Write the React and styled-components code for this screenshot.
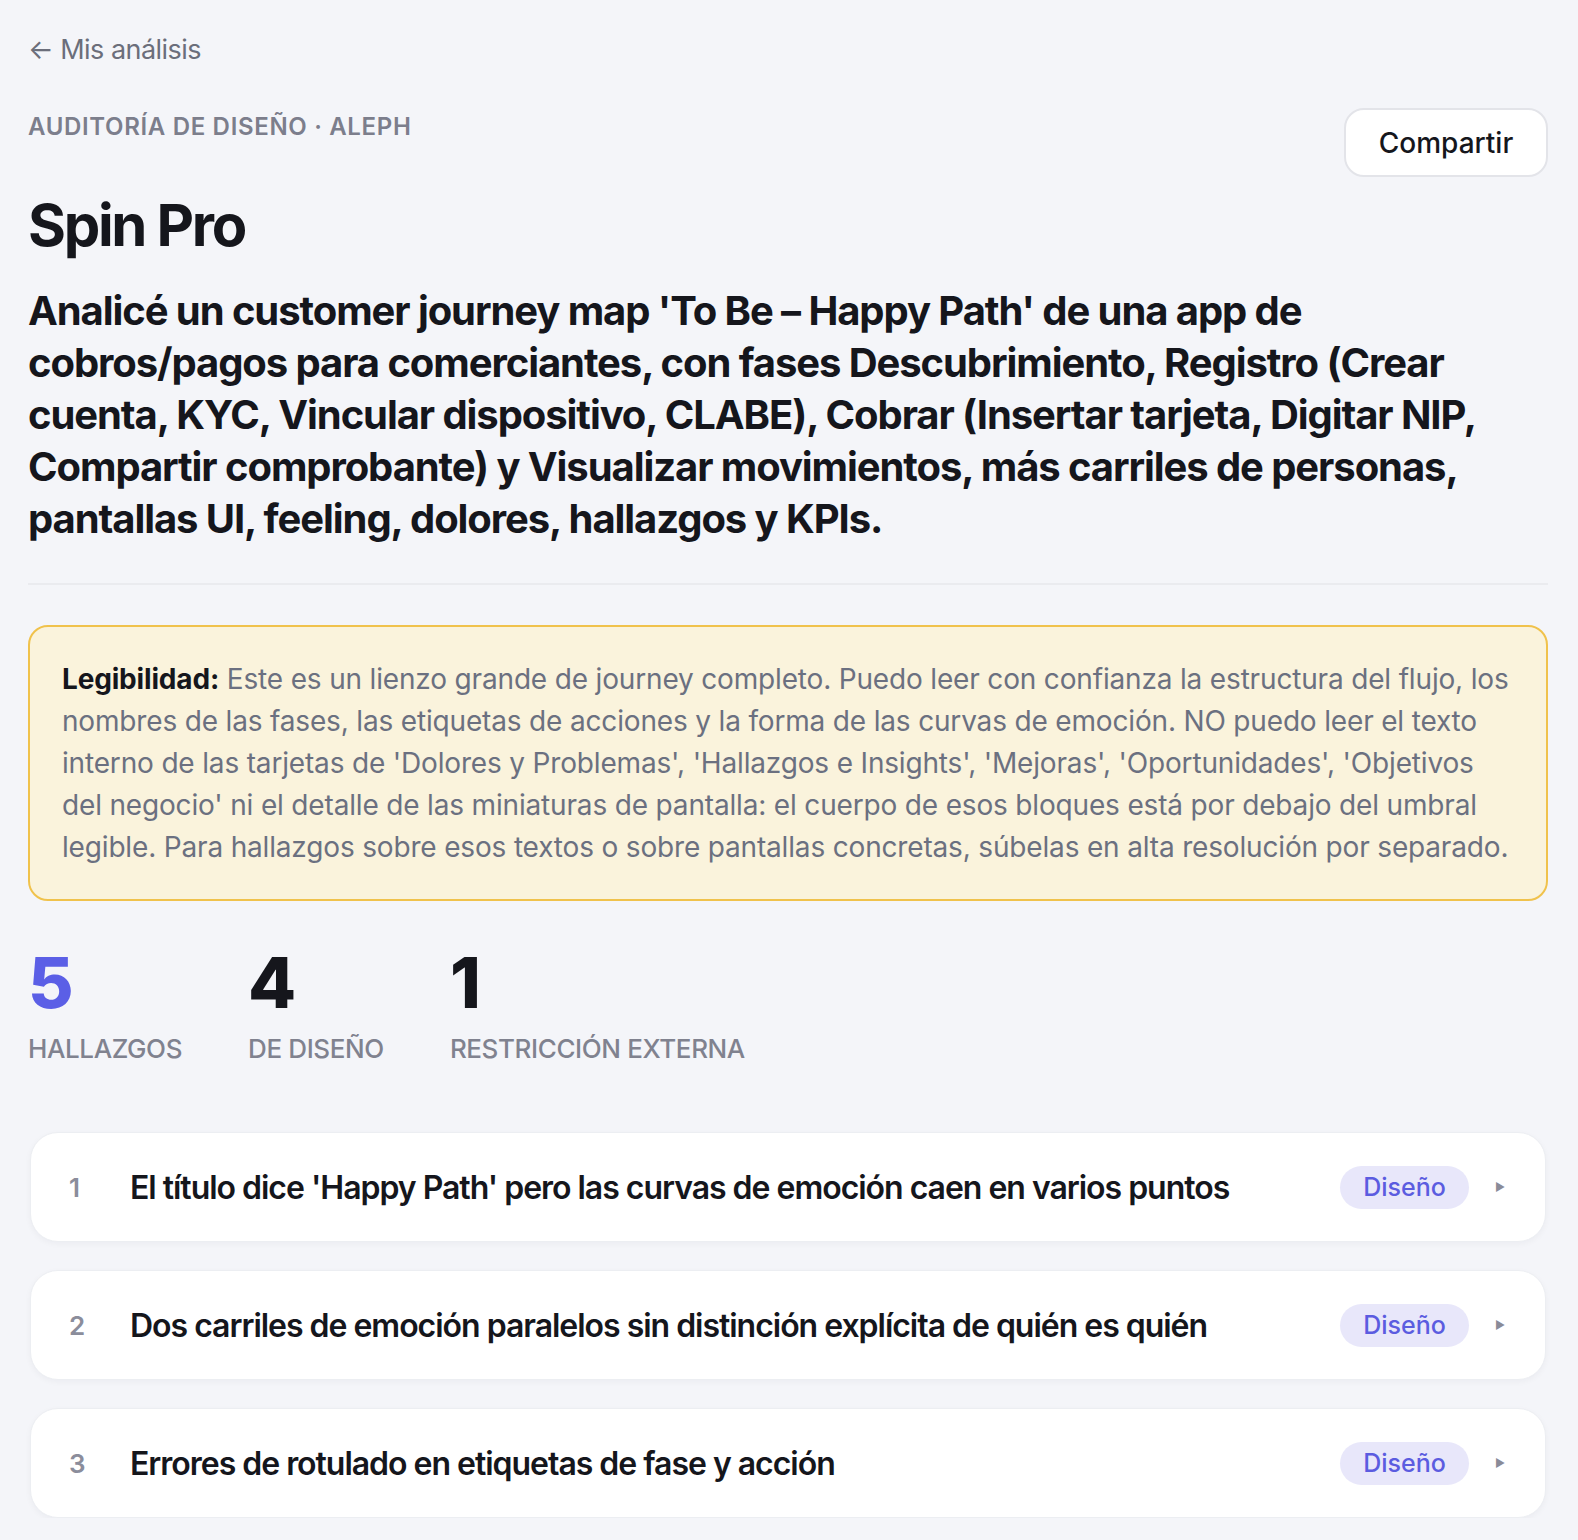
import React from "react";
import styled, { createGlobalStyle } from "styled-components";

const GlobalStyle = createGlobalStyle`
  html, body {
    margin: 0;
    padding: 0;
    background: #f4f5f9;
  }
  body {
    font-family: "Inter", "Noto Sans", sans-serif;
    color: #15161c;
    -webkit-font-smoothing: antialiased;
  }
  * {
    box-sizing: border-box;
  }
`;

const Page = styled.div`
  padding: 33px 30px 0 28px;
  display: flex;
  flex-direction: column;
`;

const BackLink = styled.a`
  font-size: 27px;
  line-height: 34px;
  color: #6b6e7b;
  text-decoration: none;
  letter-spacing: -0.02em;
  align-self: flex-start;
`;

const HeaderRow = styled.div`
  display: flex;
  justify-content: space-between;
  align-items: flex-start;
  margin-top: 41px;
`;

const HeaderText = styled.div`
  display: flex;
  flex-direction: column;
`;

const Eyebrow = styled.div`
  margin-top: 5px;
  font-size: 24px;
  line-height: 28px;
  font-weight: 600;
  letter-spacing: 0.028em;
  text-transform: uppercase;
  color: #7c7e8c;
`;

const Title = styled.h1`
  margin: 49px 0 0;
  font-size: 58px;
  line-height: 70px;
  font-weight: 700;
  letter-spacing: -0.04em;
  color: #15161c;
`;

const ShareButton = styled.button`
  width: 204px;
  height: 69px;
  border: 2px solid #e3e4e9;
  border-radius: 20px;
  background: #ffffff;
  font-family: inherit;
  font-size: 28px;
  font-weight: 500;
  color: #15161c;
  cursor: pointer;
`;

const Summary = styled.p`
  margin: 25px 0 0;
  font-size: 40px;
  line-height: 52px;
  font-weight: 700;
  letter-spacing: -0.027em;
  color: #15161c;
`;

const Divider = styled.hr`
  margin: 38px 0 0;
  border: 0;
  height: 2px;
  background: #eaebef;
`;

const Callout = styled.div`
  margin-top: 40px;
  padding: 31px 32px;
  border: 2px solid #f0c24c;
  border-radius: 20px;
  background: #faf3dc;
  font-size: 28px;
  line-height: 42px;
  letter-spacing: -0.006em;
  color: #6b7080;

  strong {
    font-weight: 700;
    color: #15161c;
  }
`;

const Stats = styled.div`
  display: flex;
  gap: 66px;
  margin-top: 42px;
`;

const Stat = styled.div`
  display: flex;
  flex-direction: column;
`;

const StatValue = styled.div`
  font-size: 70px;
  line-height: 80px;
  font-weight: 800;
  letter-spacing: -0.02em;
  color: ${(p) => (p.$accent ? "#5b5fe6" : "#15161c")};
`;

const StatLabel = styled.div`
  margin-top: 10px;
  font-size: 26px;
  line-height: 32px;
  font-weight: 500;
  letter-spacing: -0.015em;
  text-transform: uppercase;
  color: #80828f;
`;

const FindingList = styled.div`
  display: flex;
  flex-direction: column;
  gap: 28px;
  margin: 67px 2px 0;
`;

const FindingCard = styled.div`
  display: flex;
  align-items: center;
  height: 110px;
  padding: 0 40px 0 38px;
  background: #ffffff;
  border: 1px solid #eceef2;
  border-radius: 28px;
  box-shadow: 0 2px 6px rgba(20, 22, 40, 0.04);
`;

const FindingIndex = styled.span`
  width: 61px;
  flex: none;
  font-size: 26px;
  font-weight: 600;
  color: #8b8d9b;
`;

const FindingTitle = styled.span`
  flex: 1;
  font-size: 32px;
  font-weight: 600;
  letter-spacing: -0.032em;
  color: #15161c;
`;

const Badge = styled.span`
  display: inline-flex;
  align-items: center;
  height: 43px;
  padding: 0 23px;
  border-radius: 22px;
  background: #e8e7fa;
  font-size: 25px;
  font-weight: 500;
  color: #5b5ce0;
`;

const Caret = styled.span`
  margin-left: 26px;
  font-size: 11px;
  color: #8a8b98;
`;

const findings = [
  "El título dice 'Happy Path' pero las curvas de emoción caen en varios puntos",
  "Dos carriles de emoción paralelos sin distinción explícita de quién es quién",
  "Errores de rotulado en etiquetas de fase y acción",
];

export default function App() {
  return (
    <>
      <GlobalStyle />
      <Page>
        <BackLink href="#">← Mis análisis</BackLink>
        <HeaderRow>
          <HeaderText>
            <Eyebrow>Auditoría de diseño · Aleph</Eyebrow>
            <Title>Spin Pro</Title>
          </HeaderText>
          <ShareButton>Compartir</ShareButton>
        </HeaderRow>
        <Summary>
          Analicé un customer journey map 'To Be – Happy Path' de una app de
          cobros/pagos para comerciantes, con fases Descubrimiento, Registro
          (Crear cuenta, KYC, Vincular dispositivo, CLABE), Cobrar (Insertar
          tarjeta, Digitar NIP, Compartir comprobante) y Visualizar
          movimientos, más carriles de personas, pantallas UI, feeling,
          dolores, hallazgos y KPIs.
        </Summary>
        <Divider />
        <Callout>
          <strong>Legibilidad:</strong> Este es un lienzo grande de journey
          completo. Puedo leer con confianza la estructura del flujo, los
          nombres de las fases, las etiquetas de acciones y la forma de las
          curvas de emoción. NO puedo leer el texto interno de las tarjetas de
          'Dolores y Problemas', 'Hallazgos e Insights', 'Mejoras',
          'Oportunidades', 'Objetivos del negocio' ni el detalle de las
          miniaturas de pantalla: el cuerpo de esos bloques está por debajo del
          umbral legible. Para hallazgos sobre esos textos o sobre pantallas
          concretas, súbelas en alta resolución por separado.
        </Callout>
        <Stats>
          <Stat>
            <StatValue $accent>5</StatValue>
            <StatLabel>Hallazgos</StatLabel>
          </Stat>
          <Stat>
            <StatValue>4</StatValue>
            <StatLabel>De diseño</StatLabel>
          </Stat>
          <Stat>
            <StatValue>1</StatValue>
            <StatLabel>Restricción externa</StatLabel>
          </Stat>
        </Stats>
        <FindingList>
          {findings.map((title, i) => (
            <FindingCard key={title}>
              <FindingIndex>{i + 1}</FindingIndex>
              <FindingTitle>{title}</FindingTitle>
              <Badge>Diseño</Badge>
              <Caret>▶</Caret>
            </FindingCard>
          ))}
        </FindingList>
      </Page>
    </>
  );
}
